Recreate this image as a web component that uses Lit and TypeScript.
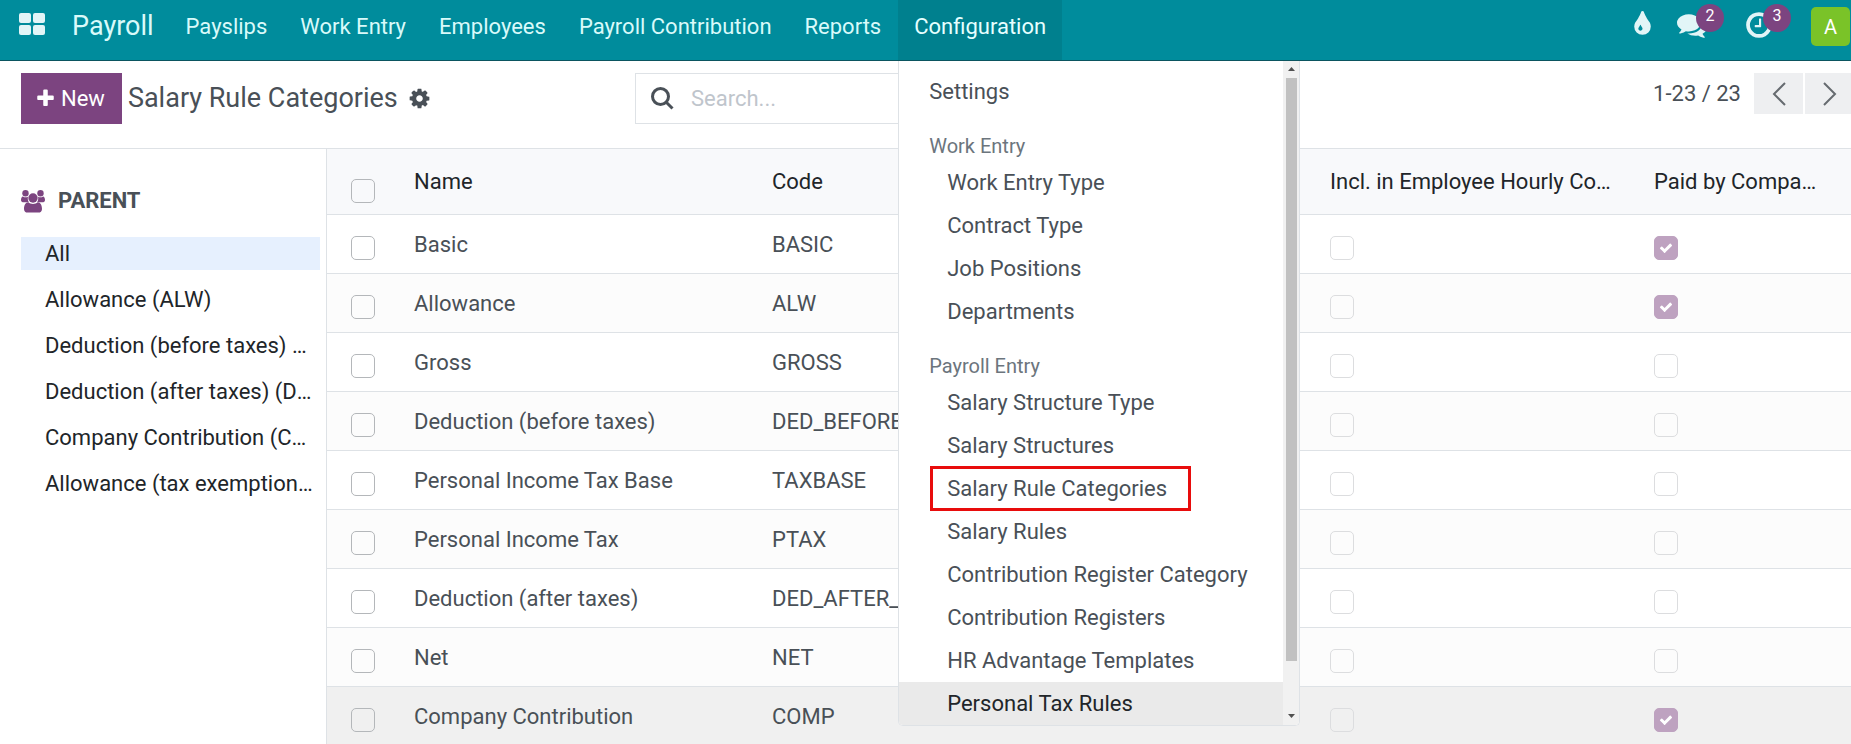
import { LitElement, html, css, svg } from "lit";
import { customElement } from "lit/decorators.js";
import { classMap } from "lit/directives/class-map.js";

const PLUS =
  "M1600 736v192q0 40-28 68t-68 28h-416v416q0 40-28 68t-68 28h-192q-40 0-68-28t-28-68v-416h-416q-40 0-68-28t-28-68v-192q0-40 28-68t68-28h416v-416q0-40 28-68t68-28h192q40 0 68 28t28 68v416h416q40 0 68 28t28 68z";
const COG =
  "M1152 896q0-106-75-181t-181-75-181 75-75 181 75 181 181 75 181-75 75-181zm512-109v222q0 12-8 23t-20 13l-185 28q-19 54-39 91 35 50 107 138 10 12 10 25t-9 23q-27 37-99 108t-94 71q-12 0-26-9l-138-108q-44 23-91 38-16 136-29 186-7 28-36 28h-222q-14 0-24.5-8.5t-11.5-21.5l-28-184q-49-16-90-37l-141 107q-10 9-25 9-14 0-25-11-126-114-165-168-7-10-7-23 0-12 8-23 15-21 51-66.5t54-70.5q-27-50-41-99l-183-27q-13-2-21-12.5t-8-23.5v-222q0-12 8-23t19-13l186-28q14-46 39-92-40-57-107-138-10-12-10-24 0-10 9-23 26-36 98.5-107.5t94.5-71.5q13 0 26 10l138 107q44-23 91-38 16-136 29-186 7-28 36-28h222q14 0 24.5 8.5t11.5 21.5l28 184q49 16 90 37l142-107q9-9 24-9 13 0 25 10 129 119 165 170 7 8 7 22 0 12-8 23-15 21-51 66.5t-54 70.5q26 50 41 98l183 28q13 2 21 12.5t8 23.5z";
const COMMENTS =
  "M1408 768q0 139-94 257t-256.5 186.5-353.5 68.5q-86 0-176-16-124 88-278 128-36 9-86 16h-3q-11 0-20.5-8t-11.5-21q-1-3-1-6.5t.5-6.5 2-6l2.5-5 3.5-5.5 4-5 4.5-5 4-4.5q5-6 23-25t26-29.5 22.5-29 25-38.5 20.5-44q-124-72-195-177t-71-224q0-139 94-257t256.5-186.5 353.5-68.5 353.5 68.5 256.5 186.5 94 257zm384 256q0 120-71 224.5t-195 176.5q10 24 20.5 44t25 38.5 22.5 29 26 29.5 23 25q1 1 4 4.5t4.5 5 4 5 3.5 5.5l2.5 5 2 6 .5 6.5-1 6.5q-3 14-13 22t-22 7q-50-7-86-16-154-40-278-128-90 16-176 16-271 0-472-132 58 4 88 4 161 0 309-45t264-129q125-92 192-212t67-254q0-77-23-152 129 71 204 178t75 230z";
const CLOCK =
  "M1024 544v448q0 14-9 23t-23 9h-320q-14 0-23-9t-9-23v-64q0-14 9-23t23-9h224v-352q0-14 9-23t23-9h64q14 0 23 9t9 23zm416 352q0-148-73-273t-198-198-273-73-273 73-198 198-73 273 73 273 198 198 273 73 273-73 198-198 73-273zm224 0q0 209-103 385.5t-279.5 279.5-385.5 103-385.5-103-279.5-279.5-103-385.5 103-385.5 279.5-279.5 385.5-103 385.5 103 279.5 279.5 103 385.5z";
const TINT =
  "M896 1152q0-36-20-69-1-1-15.5-22.5t-25.5-38-25-44-21-50.5q-4-16-21-16t-21 16q-7 23-21 50.5t-25 44-25.5 38-15.5 22.5q-20 33-20 69 0 53 37.5 90.5t90.5 37.5 90.5-37.5 37.5-90.5zm512-128q0 212-150 362t-362 150-362-150-150-362q0-145 81-275 6-9 62.5-90.5t101-151 99.5-178 83-201.5q9-30 34-47t51-17 51.5 17 33.5 47q28 93 83 201.5t99.5 178 101 151 62.5 90.5q81 127 81 275z";
const CHECK =
  "M1671 566q0 40-28 68l-724 724-136 136q-28 28-68 28t-68-28l-136-136-362-362q-28-28-28-68t28-68l136-136q28-28 68-28t68 28l294 295 656-657q28-28 68-28t68 28l136 136q28 28 28 68z";

const glyph = (d: string, size: number) => html`
  <svg class="glyph" width=${size} height=${size} viewBox="0 0 1792 1792" aria-hidden="true">
    ${svg`<path d=${d} fill="currentColor"></path>`}
  </svg>
`;

const MENUS = ["Payslips", "Work Entry", "Employees", "Payroll Contribution", "Reports", "Configuration"];

const PARENTS = [
  "All",
  "Allowance (ALW)",
  "Deduction (before taxes) (DED_BEFORE)",
  "Deduction (after taxes) (DED_AFTER)",
  "Company Contribution (COMP)",
  "Allowance (tax exemption) (ALW_TAX)",
];

interface Category {
  name: string;
  code: string;
  paid: boolean;
}

const CATEGORIES: Category[] = [
  { name: "Basic", code: "BASIC", paid: true },
  { name: "Allowance", code: "ALW", paid: true },
  { name: "Gross", code: "GROSS", paid: false },
  { name: "Deduction (before taxes)", code: "DED_BEFORE", paid: false },
  { name: "Personal Income Tax Base", code: "TAXBASE", paid: false },
  { name: "Personal Income Tax", code: "PTAX", paid: false },
  { name: "Deduction (after taxes)", code: "DED_AFTER_", paid: false },
  { name: "Net", code: "NET", paid: false },
  { name: "Company Contribution", code: "COMP", paid: true },
];

const GROUPS = [
  { title: "Work Entry", items: ["Work Entry Type", "Contract Type", "Job Positions", "Departments"] },
  {
    title: "Payroll Entry",
    items: [
      "Salary Structure Type",
      "Salary Structures",
      "Salary Rule Categories",
      "Salary Rules",
      "Contribution Register Category",
      "Contribution Registers",
      "HR Advantage Templates",
      "Personal Tax Rules",
    ],
  },
];

const base = css`
  :host,
  * {
    box-sizing: border-box;
  }
  a {
    color: inherit;
    text-decoration: none;
  }
  ul {
    list-style: none;
    margin: 0;
    padding: 0;
  }
  button {
    font: inherit;
    border: 0;
    padding: 0;
    cursor: pointer;
  }
  .glyph {
    display: block;
    flex: none;
  }
`;

@customElement("config-menu")
export class ConfigMenu extends LitElement {
  static styles = [
    base,
    css`
      :host {
        display: flex;
        width: 402px;
        background: #fff;
        color: #495057;
        border: 1px solid #dee2e6;
        border-top: 0;
        border-radius: 0 0 5px 5px;
        overflow: hidden;
      }
      .list {
        flex: 1;
        padding-top: 9px;
      }
      .item {
        display: block;
        padding: 0 30px;
        line-height: 43px;
        white-space: nowrap;
      }
      .nested {
        padding-left: 48px;
      }
      .heading {
        margin: 0;
        padding: 18px 30px 0;
        font-size: 20px;
        font-weight: 400;
        line-height: 30px;
        color: #6c757d;
      }
      .hovered {
        background: #eaeaea;
        color: #212529;
      }
      .label {
        position: relative;
      }
      .marked::after {
        content: "";
        position: absolute;
        inset: -10px -24px -10px -17px;
        border: 3px solid #e80c0c;
      }
      .scroll {
        width: 16px;
        display: flex;
        flex-direction: column;
        align-items: center;
        justify-content: space-between;
        background: #f1f1f1;
      }
      .arrow {
        display: block;
        width: 7px;
        height: 4px;
        margin: 6px 0 7px;
      }
      .thumb {
        width: 11px;
        flex: 1;
        margin-bottom: 47px;
        background: #c1c1c1;
      }
    `,
  ];

  render() {
    return html`
      <nav class="list">
        <a class="item" href="#">Settings</a>
        ${GROUPS.map(
          (group) => html`
            <h3 class="heading">${group.title}</h3>
            <ul>
              ${group.items.map(
                (item) => html`<li>
                  <a
                    href="#"
                    class=${classMap({ item: true, nested: true, hovered: item === "Personal Tax Rules" })}
                    ><span class=${classMap({ label: true, marked: item === "Salary Rule Categories" })}
                      >${item}</span
                    ></a
                  >
                </li>`
              )}
            </ul>
          `
        )}
      </nav>
      <div class="scroll" aria-hidden="true">
        <svg class="arrow" viewBox="0 0 7 4"><path d="M3.5 0L7 4H0z" fill="#505050"></path></svg>
        <div class="thumb"></div>
        <svg class="arrow" viewBox="0 0 7 4"><path d="M0 0H7L3.5 4z" fill="#505050"></path></svg>
      </div>
    `;
  }
}

@customElement("top-bar")
export class TopBar extends LitElement {
  static styles = [
    base,
    css`
      :host {
        display: flex;
        height: 61px;
        background: #008c9c;
        border-bottom: 1px solid #0b5560;
        color: #d9fafa;
      }
      .apps {
        display: flex;
        padding: 13px 27px 0 19px;
        background: none;
      }
      .brand {
        font-size: 27px;
        line-height: 52px;
        margin-right: 16px;
      }
      .menus {
        display: flex;
        gap: 1px;
      }
      .entry {
        position: relative;
      }
      .menu {
        display: block;
        height: 60px;
        padding: 0 16px;
        line-height: 54px;
        white-space: nowrap;
      }
      .open {
        background: #00808e;
        color: #e6ffff;
      }
      .drop {
        position: absolute;
        z-index: 5;
        top: 61px;
        left: 0;
      }
      .tray {
        display: flex;
        align-items: flex-start;
        margin-left: auto;
        padding-right: 1px;
        color: #e2f5f7;
      }
      .tool {
        position: relative;
        display: flex;
        background: none;
        color: inherit;
        margin-top: 10px;
      }
      .chat {
        margin-left: 20px;
      }
      .clock {
        margin: 10px 37px 0;
      }
      .badge {
        position: absolute;
        left: 19px;
        top: -6px;
        width: 28px;
        height: 28px;
        border-radius: 14px;
        background: #7c4480;
        color: #fff;
        font-size: 16px;
        line-height: 24px;
        text-align: center;
      }
      .avatar {
        width: 39px;
        height: 39px;
        margin-top: 7px;
        border-radius: 5px;
        background: #7ac328;
        color: #fff;
        font-size: 20px;
        line-height: 40px;
        text-align: center;
      }
    `,
  ];

  render() {
    return html`
      <button class="apps" aria-label="Home menu">
        <svg width="26" height="22" viewBox="0 0 26 22" fill="#e2f5f7">
          <rect x="0" y="0" width="12" height="10" rx="2"></rect>
          <rect x="14" y="0" width="12" height="10" rx="2"></rect>
          <rect x="0" y="12" width="12" height="10" rx="2"></rect>
          <rect x="14" y="12" width="12" height="10" rx="2"></rect>
        </svg>
      </button>
      <a class="brand" href="#">Payroll</a>
      <nav class="menus">
        ${MENUS.map((name) => {
          const open = name === "Configuration";
          return html`<div class="entry">
            <a class=${classMap({ menu: true, open })} href="#">${name}</a>
            ${open ? html`<config-menu class="drop"></config-menu>` : null}
          </div>`;
        })}
      </nav>
      <div class="tray">
        <button class="tool" aria-label="Theme">${glyph(TINT, 29)}</button>
        <button class="tool chat" aria-label="Messages">
          ${glyph(COMMENTS, 30)}<span class="badge">2</span>
        </button>
        <button class="tool clock" aria-label="Activities">
          ${glyph(CLOCK, 30)}<span class="badge">3</span>
        </button>
        <button class="avatar" aria-label="Account">A</button>
      </div>
    `;
  }
}

@customElement("control-panel")
export class ControlPanel extends LitElement {
  static styles = [
    base,
    css`
      :host {
        display: flex;
        align-items: flex-start;
        gap: 26px;
        height: 88px;
        padding: 12px 0 0 21px;
        border-bottom: 1px solid #dee2e6;
        overflow: hidden;
        color: #495057;
      }
      .left {
        display: flex;
        align-items: center;
        flex: 1;
      }
      .new {
        display: flex;
        align-items: center;
        gap: 5px;
        height: 51px;
        padding: 0 17px 0 14px;
        background: #7c4480;
        color: #fff;
      }
      .title {
        margin: 0 10px 0 6px;
        font-size: 27px;
        font-weight: 400;
        line-height: 51px;
        white-space: nowrap;
      }
      .gear {
        background: none;
        color: inherit;
      }
      .search {
        display: flex;
        align-items: center;
        flex: 1;
        height: 51px;
        padding-left: 15px;
        border: 1px solid #dee2e6;
      }
      .field {
        flex: 1;
        margin-left: 17px;
        padding: 0;
        border: 0;
        outline: 0;
        background: none;
        font: inherit;
        color: inherit;
      }
      .field::placeholder {
        color: #bfc5cc;
        opacity: 1;
      }
      .right {
        display: flex;
        align-items: center;
        justify-content: flex-end;
        flex: 1;
        gap: 2px;
        margin-right: -3px;
      }
      .count {
        margin-right: 11px;
        line-height: 39px;
      }
      .page {
        display: flex;
        align-items: center;
        justify-content: center;
        width: 49px;
        height: 41px;
        background: #eeeff1;
        color: #666b70;
      }
    `,
  ];

  render() {
    return html`
      <div class="left">
        <button class="new">${glyph(PLUS, 21)}<span>New</span></button>
        <h1 class="title">Salary Rule Categories</h1>
        <button class="gear" aria-label="Actions">${glyph(COG, 23)}</button>
      </div>
      <label class="search">
        <svg width="23" height="23" viewBox="0 0 23 23" fill="none" stroke="#495057" stroke-width="3">
          <circle cx="9.5" cy="9.5" r="8"></circle>
          <path d="M15 15L21.500 21.500"></path>
        </svg>
        <input class="field" type="search" placeholder="Search..." aria-label="Search" />
      </label>
      <div class="right">
        <span class="count">1-23 / 23</span>
        <button class="page" aria-label="Previous">
          <svg width="14" height="24" viewBox="0 0 14 24" fill="none" stroke="currentColor" stroke-width="2">
            <path d="M13 1L2 12L13 23"></path>
          </svg>
        </button>
        <button class="page" aria-label="Next">
          <svg width="14" height="24" viewBox="0 0 14 24" fill="none" stroke="currentColor" stroke-width="2">
            <path d="M1 1L12 12L1 23"></path>
          </svg>
        </button>
      </div>
    `;
  }
}

@customElement("parent-filter")
export class ParentFilter extends LitElement {
  static styles = [
    base,
    css`
      :host {
        display: block;
        width: 327px;
        flex: none;
        padding: 36px 6px 0 21px;
        border-right: 1px solid #dee2e6;
        color: #212529;
      }
      .head {
        display: flex;
        align-items: center;
        gap: 13px;
        margin: 0 0 20px;
        font-size: 22px;
        font-weight: 700;
        line-height: 32px;
        color: #495057;
      }
      .options {
        display: grid;
        grid-template-columns: minmax(0, 1fr);
        gap: 13px;
      }
      .option {
        display: block;
        padding: 0 7px 0 24px;
        line-height: 33px;
        white-space: nowrap;
        overflow: hidden;
        text-overflow: ellipsis;
      }
      .active {
        background: #e6f0fe;
      }
    `,
  ];

  render() {
    return html`
      <h2 class="head">
        <svg width="24" height="23" viewBox="0 0 24 23" fill="#7c4480" aria-hidden="true">
          <circle cx="4.500" cy="3.200" r="3.200"></circle>
          <circle cx="19.500" cy="3.200" r="3.200"></circle>
          <path d="M2 6.500C3.200 7.600 5.500 7.600 7 6.800C6.400 9 7 11 8 12.300H3C1 12.300 0 11.500 0 10C0 8.500 .6 6.500 2 6.500Z"></path>
          <path d="M22 6.500C20.800 7.600 18.500 7.600 17 6.800C17.600 9 17 11 16 12.300H21C23 12.300 24 11.500 24 10C24 8.500 23.400 6.500 22 6.500Z"></path>
          <circle cx="12" cy="8" r="4.700"></circle>
          <path d="M7.300 12.200C9.500 14.500 14.500 14.500 16.700 12.200C19.500 12.200 21 15.500 21 19C21 21.500 19.500 22.600 17.300 22.600H6.700C4.500 22.600 3 21.500 3 19C3 15.500 4.500 12.200 7.300 12.200Z"></path>
        </svg>
        PARENT
      </h2>
      <ul class="options">
        ${PARENTS.map(
          (name, i) => html`<li>
            <a href="#" class=${classMap({ option: true, active: i === 0 })}>${name}</a>
          </li>`
        )}
      </ul>
    `;
  }
}

@customElement("category-table")
export class CategoryTable extends LitElement {
  static styles = [
    base,
    css`
      :host {
        display: block;
        flex: 1;
        min-width: 0;
      }
      .table {
        width: 100%;
        table-layout: fixed;
        border-collapse: separate;
        border-spacing: 0;
        color: #495057;
      }
      .c-check {
        width: 75px;
      }
      .c-name {
        width: 358px;
      }
      .c-hourly {
        width: 324px;
      }
      .c-paid {
        width: 209px;
      }
      .th,
      .td {
        padding: 0 30px 0 12px;
        text-align: left;
        font-weight: 400;
        white-space: nowrap;
        overflow: hidden;
        text-overflow: ellipsis;
        border-bottom: 1px solid #dee2e6;
      }
      .th {
        height: 66px;
        background: #f8f9fb;
        color: #212529;
      }
      .td {
        height: 59px;
      }
      .row:nth-child(even) {
        background: #fcfcfc;
      }
      .row.hovered {
        background: #f0f0f0;
      }
      .select {
        padding: 8px 0 0 24px;
      }
      .th.select {
        padding-top: 18px;
      }
      .flag {
        padding-top: 8px;
      }
      .box {
        position: relative;
        display: block;
        width: 24px;
        height: 24px;
      }
      .input {
        appearance: none;
        display: block;
        width: 24px;
        height: 24px;
        margin: 0;
        border: 1px solid #b4b7ba;
        border-radius: 5px;
      }
      .input:disabled {
        border-color: #dcdddf;
      }
      .input:checked {
        border-color: #bea2c0;
        background: #bea2c0;
      }
      .tick {
        position: absolute;
        inset: 5px;
        color: #fff;
        pointer-events: none;
      }
    `,
  ];

  private flag(label: string, on: boolean) {
    return html`<span class="box">
      <input class="input" type="checkbox" disabled aria-label=${label} .checked=${on} />
      ${on ? html`<span class="tick">${glyph(CHECK, 14)}</span>` : null}
    </span>`;
  }

  render() {
    return html`
      <table class="table">
        <colgroup>
          <col class="c-check" />
          <col class="c-name" />
          <col />
          <col class="c-hourly" />
          <col class="c-paid" />
        </colgroup>
        <thead>
          <tr>
            <th class="th select"><input class="input" type="checkbox" aria-label="Select all" /></th>
            <th class="th">Name</th>
            <th class="th">Code</th>
            <th class="th">Incl. in Employee Hourly Cost</th>
            <th class="th">Paid by Company</th>
          </tr>
        </thead>
        <tbody>
          ${CATEGORIES.map(
            (c, i) => html`<tr class=${classMap({ row: true, hovered: i === 8 })}>
              <td class="td select">
                <input class="input" type="checkbox" aria-label=${`Select ${c.name}`} />
              </td>
              <td class="td">${c.name}</td>
              <td class="td">${c.code}</td>
              <td class="td flag">${this.flag("Included in employee hourly cost", false)}</td>
              <td class="td flag">${this.flag("Paid by company", c.paid)}</td>
            </tr>`
          )}
        </tbody>
      </table>
    `;
  }
}

@customElement("app-root")
export class AppRoot extends LitElement {
  static styles = css`
    :host {
      display: flex;
      flex-direction: column;
      height: 100vh;
      overflow: hidden;
      background: #fff;
      font-family: Roboto, "Liberation Sans", sans-serif;
      font-size: 22px;
    }
    .header,
    .panel {
      flex: none;
    }
    .content {
      flex: 1;
      min-height: 0;
      display: flex;
      overflow: hidden;
    }
  `;

  render() {
    return html`
      <top-bar class="header"></top-bar>
      <control-panel class="panel"></control-panel>
      <main class="content">
        <parent-filter></parent-filter>
        <category-table></category-table>
      </main>
    `;
  }
}
